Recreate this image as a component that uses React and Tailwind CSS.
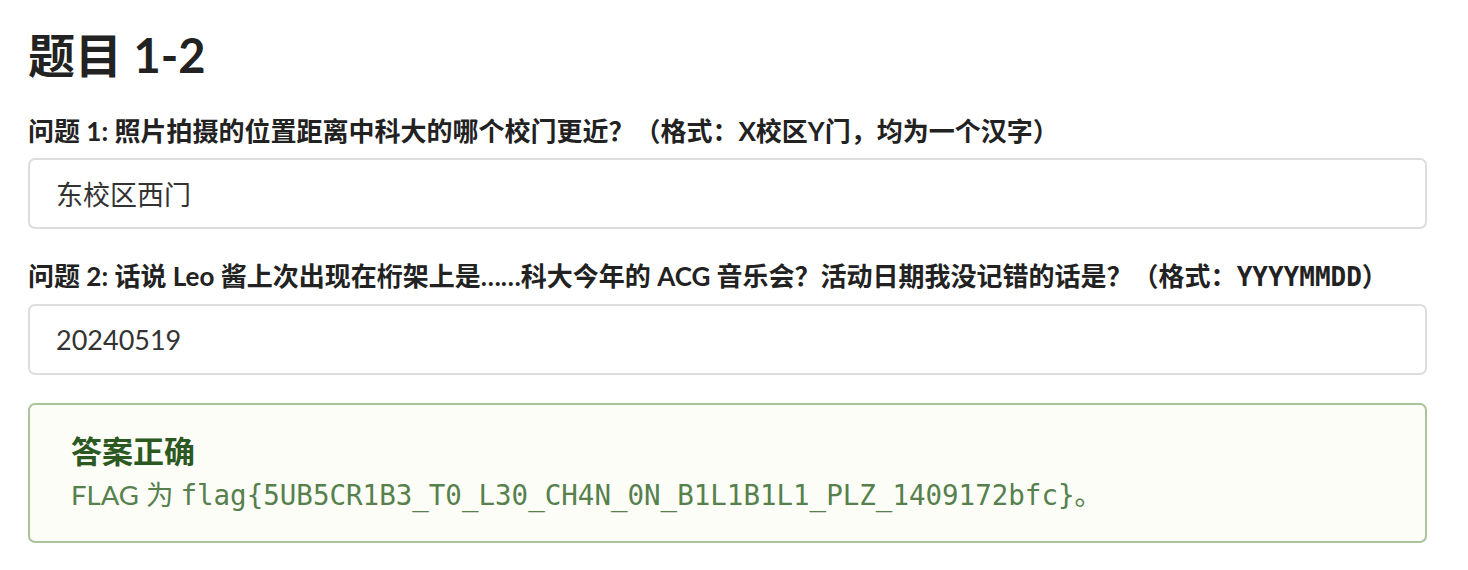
import React from 'react';

const sans = "font-['Lato','Noto_Sans_CJK_SC',sans-serif]";
const mono = "font-['DejaVu_Sans_Mono','Noto_Sans_CJK_SC',monospace]";

const questions = [
  {
    id: 1,
    label: (
      <>问题 1: 照片拍摄的位置距离中科大的哪个校门更近？（格式：X校区Y门，均为一个汉字）</>
    ),
    value: '东校区西门',
    first: true,
  },
  {
    id: 2,
    label: (
      <>
        问题 2: 话说 Leo 酱上次出现在桁架上是……科大今年的 ACG 音乐会？活动日期我没记错的话是？（格式：
        <code className={`${mono} font-bold`}>YYYYMMDD</code>）
      </>
    ),
    value: '20240519',
  },
];

export default function App() {
  return (
    <div className={`${sans} min-h-screen bg-white pl-[28px] pr-[41px] pt-[26px] text-[#222]`}>
      <h1 className="text-[47px] font-bold leading-[58px] text-[#222]">题目 1-2</h1>

      {questions.map((q) => (
        <div key={q.id} className={q.first ? 'mt-[29px]' : 'mt-[29px]'}>
          <label className="block text-[26px] font-bold leading-[36px] text-[#222]">
            {q.label}
          </label>
          <input
            readOnly
            value={q.value}
            className={`${sans} mt-[9px] block h-[71px] w-full rounded-[7px] border-2 border-[#dddddd] bg-white px-[26px] text-[27px] text-[#333] outline-none`}
          />
        </div>
      ))}

      {/* result box */}
      <div className="mt-[28px] rounded-[7px] border-2 border-[#a9c49b] bg-[#fcfdf7] pl-[41px] pr-[26px] pt-[26px] pb-[26px]">
        <div className="text-[31px] font-bold leading-[40px] text-[#2c5822]">答案正确</div>
        <div className="mt-[4px] text-[27.5px] leading-[40px] text-[#56804c]">
          FLAG 为 <code className={mono}>flag{'{'}5UB5CR1B3_T0_L30_CH4N_0N_B1L1B1L1_PLZ_1409172bfc{'}'}</code>。
        </div>
      </div>
    </div>
  );
}
